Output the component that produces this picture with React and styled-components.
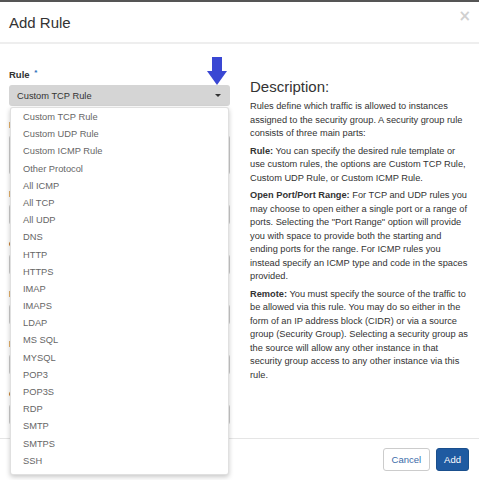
import styled, { createGlobalStyle } from 'styled-components';

const protocols = [
  'Custom TCP Rule', 'Custom UDP Rule', 'Custom ICMP Rule', 'Other Protocol',
  'All ICMP', 'All TCP', 'All UDP', 'DNS', 'HTTP', 'HTTPS', 'IMAP', 'IMAPS',
  'LDAP', 'MS SQL', 'MYSQL', 'POP3', 'POP3S', 'RDP', 'SMTP', 'SMTPS', 'SSH',
];

const hiddenFields = [
  { label: 'Description', tall: true },
  { label: 'Direction' },
  { label: 'Open Port' },
  { label: 'Port' },
  { label: 'Remote' },
  { label: 'CIDR' },
];

const App = () => {
  return (
    <>
      <GlobalStyle />
      <Modal>
        <Header>
          <Title>Add Rule</Title>
          <Close type="button">×</Close>
        </Header>
        <Body>
          <FormColumn>
            <Label>
              Rule <Required>*</Required>
            </Label>
            <SelectWrap>
              <Pointer viewBox="0 0 20 28" aria-hidden="true">
                <rect x="5" y="0" width="10" height="15" fill="#3a47d3" />
                <polygon points="0,14 20,14 10,28" fill="#3a47d3" />
              </Pointer>
              <SelectBox>
                Custom TCP Rule
                <Caret />
              </SelectBox>
              <Dropdown>
                {protocols.map((p) => (
                  <Option key={p}>{p}</Option>
                ))}
              </Dropdown>
            </SelectWrap>
            {hiddenFields.map((f) => (
              <FieldGroup key={f.label}>
                <Label>{f.label}</Label>
                <Input tall={f.tall} />
              </FieldGroup>
            ))}
          </FormColumn>
          <HelpColumn>
            <HelpTitle>Description:</HelpTitle>
            <HelpText>
              Rules define which traffic is allowed to instances assigned to the
              security group. A security group rule consists of three main parts:
            </HelpText>
            <HelpText>
              <strong>Rule:</strong> You can specify the desired rule template or
              use custom rules, the options are Custom TCP Rule, Custom UDP Rule,
              or Custom ICMP Rule.
            </HelpText>
            <HelpText>
              <strong>Open Port/Port Range:</strong> For TCP and UDP rules you may
              choose to open either a single port or a range of ports. Selecting
              the "Port Range" option will provide you with space to provide both
              the starting and ending ports for the range. For ICMP rules you
              instead specify an ICMP type and code in the spaces provided.
            </HelpText>
            <HelpText>
              <strong>Remote:</strong> You must specify the source of the traffic
              to be allowed via this rule. You may do so either in the form of an
              IP address block (CIDR) or via a source group (Security Group).
              Selecting a security group as the source will allow any other
              instance in that security group access to any other instance via
              this rule.
            </HelpText>
          </HelpColumn>
        </Body>
        <Footer>
          <Button type="button">Cancel</Button>
          <Button type="button" primary>Add</Button>
        </Footer>
      </Modal>
    </>
  );
};

const GlobalStyle = createGlobalStyle`
  html, body {
    margin: 0;
    padding: 0;
    background: #fff;
  }
  body {
    font-family: "Liberation Sans", Arial, sans-serif;
    color: #333;
  }
`;

const Modal = styled.div`
  width: 479px;
  height: 480px;
  box-sizing: border-box;
  border-top: 2px solid #555;
  background: #fff;
  display: flex;
  flex-direction: column;
`;

const Header = styled.div`
  height: 40px;
  flex: none;
  padding: 0 9px;
  display: flex;
  align-items: center;
  justify-content: space-between;
  border-bottom: 2px solid #eee;
`;

const Title = styled.h4`
  margin: 0;
  font-size: 15px;
  font-weight: normal;
  color: #333;
`;

const Close = styled.button`
  align-self: flex-start;
  margin-top: 6px;
  margin-right: -1px;
  padding: 0;
  border: none;
  background: none;
  font-family: "DejaVu Sans", sans-serif;
  font-size: 15px;
  font-weight: bold;
  line-height: 16px;
  color: #d0d0d0;
`;

const Body = styled.div`
  flex: 1;
  min-height: 0;
  display: grid;
  grid-template-columns: 221px 220px;
  column-gap: 20px;
  align-items: start;
  padding: 22px 9px 0 9px;
`;

const FormColumn = styled.div`
  display: flex;
  flex-direction: column;
`;

const Label = styled.label`
  display: block;
  font-size: 9.5px;
  font-weight: bold;
  line-height: 13px;
  color: #333;
  margin-bottom: 4px;
`;

const Required = styled.span`
  color: #2a6ebb;
  font-size: 8px;
  vertical-align: 3px;
  margin-left: 2px;
`;

const SelectWrap = styled.div`
  position: relative;
`;

const Pointer = styled.svg`
  position: absolute;
  left: 198px;
  top: -28px;
  width: 20px;
  height: 28px;
`;

const SelectBox = styled.div`
  height: 21px;
  box-sizing: border-box;
  padding: 0 9px 0 8px;
  border-radius: 3px;
  background: #d5d5d5;
  display: flex;
  align-items: center;
  justify-content: space-between;
  font-size: 9.3px;
  color: #333;
`;

const Caret = styled.span`
  width: 0;
  height: 0;
  border-left: 3px solid transparent;
  border-right: 3px solid transparent;
  border-top: 3px solid #333;
`;

const Dropdown = styled.ul`
  position: absolute;
  z-index: 10;
  top: calc(100% + 1px);
  left: 1px;
  right: 1px;
  margin: 0;
  padding: 1px 0 4px;
  list-style: none;
  background: #fff;
  border: 1px solid rgba(0, 0, 0, 0.12);
  border-radius: 3px;
  box-shadow: 0 2px 5px rgba(0, 0, 0, 0.22);
`;

const Option = styled.li`
  height: 17.2px;
  line-height: 17.2px;
  padding-left: 12px;
  font-size: 9.3px;
  color: #666;
`;

const FieldGroup = styled.div`
  margin-top: 12px;
`;

const Input = styled.div`
  height: ${(p) => (p.tall ? '40px' : '21px')};
  box-sizing: border-box;
  border: 1px solid #ccc;
  border-radius: 3px;
`;

const HelpColumn = styled.div`
  padding-top: 12px;
`;

const HelpTitle = styled.h3`
  margin: 0 0 5px;
  font-size: 15px;
  font-weight: normal;
  line-height: 17px;
  color: #333;
`;

const HelpText = styled.p`
  margin: 0 0 4px;
  font-size: 9.26px;
  line-height: 13.5px;
  color: #333;

  strong {
    font-weight: bold;
  }
`;

const Footer = styled.div`
  flex: none;
  height: 42px;
  box-sizing: border-box;
  border-top: 1px solid #e5e5e5;
  padding: 9px 10px;
  display: flex;
  justify-content: flex-end;
  gap: 6px;
`;

const Button = styled.button`
  height: 23px;
  padding: 0 ${(p) => (p.primary ? '7px' : '8px')};
  border-radius: 3px;
  border: 1px solid ${(p) => (p.primary ? '#1a4f8d' : '#ccc')};
  background: ${(p) => (p.primary ? '#1f5aa1' : '#fff')};
  color: ${(p) => (p.primary ? '#fff' : '#3a6aa8')};
  font-family: "Liberation Sans", Arial, sans-serif;
  font-size: 9.5px;
`;

export default App;
